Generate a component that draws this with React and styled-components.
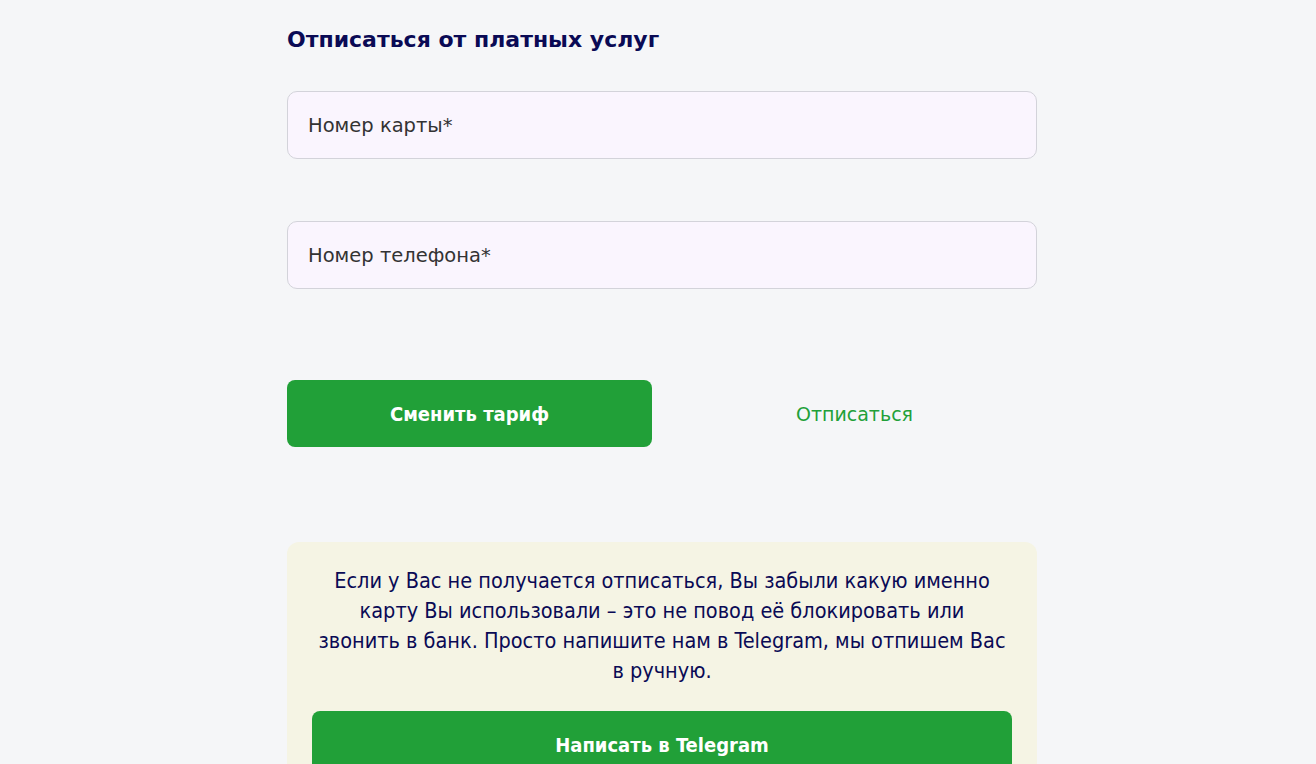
import React from 'react';
import styled, { createGlobalStyle } from 'styled-components';

const navy = '#0a0a55';
const green = '#21a038';

const GlobalStyle = createGlobalStyle`
    body {
        margin: 0;
        padding-left: 8px;
        background: #f5f6f8;
        font-family: "DejaVu Sans", sans-serif;
    }
`;

const Page = styled.div`
    width: 750px;
    margin: 0 auto;
    padding-top: 24px;
    display: flex;
    flex-direction: column;
`;

const Title = styled.h2`
    margin: 0 0 35px;
    font-size: 22px;
    line-height: 32px;
    font-weight: bold;
    color: ${navy};
`;

const Fields = styled.div`
    display: flex;
    flex-direction: column;
    gap: 62px;
`;

const Input = styled.input`
    box-sizing: border-box;
    height: 68px;
    width: 100%;
    padding: 0 20px;
    border: 1px solid #d3d3da;
    border-radius: 10px;
    background: #faf5fe;
    font-family: "DejaVu Sans", sans-serif;
    font-size: 19.5px;
    outline: none;

    &::placeholder {
        color: #333;
    }
`;

const Actions = styled.div`
    display: grid;
    grid-template-columns: 1fr 1fr;
    gap: 20px;
    margin-top: 91px;
`;

const Button = styled.button`
    height: 67px;
    border: none;
    border-radius: 8px;
    background: ${green};
    color: #fff;
    font-family: "DejaVu Sans Condensed", sans-serif;
    font-weight: bold;
    font-size: 20px;
    cursor: pointer;
    width: 100%;
`;

const LinkButton = styled.button`
    height: 67px;
    border: none;
    background: none;
    color: ${green};
    font-family: "DejaVu Sans", sans-serif;
    font-size: 19px;
    cursor: pointer;
`;

const Note = styled.div`
    margin-top: 95px;
    background: #f5f4e4;
    border-radius: 12px;
    padding: 24px 25px 0;
    display: flex;
    flex-direction: column;
    gap: 25px;
`;

const NoteText = styled.p`
    margin: 0 -12px;
    text-align: center;
    color: ${navy};
    font-family: "DejaVu Sans Condensed", sans-serif;
    font-size: 21.5px;
    line-height: 30px;
`;

const App = () => (
    <>
        <GlobalStyle />
        <Page>
            <Title>Отписаться от платных услуг</Title>
            <Fields>
                <Input placeholder="Номер карты*" />
                <Input placeholder="Номер телефона*" />
            </Fields>
            <Actions>
                <Button>Сменить тариф</Button>
                <LinkButton>Отписаться</LinkButton>
            </Actions>
            <Note>
                <NoteText>
                    Если у Вас не получается отписаться, Вы забыли какую именно<br />
                    карту Вы использовали – это не повод её блокировать или<br />
                    звонить в банк. Просто напишите нам в Telegram, мы отпишем Вас<br />
                    в ручную.
                </NoteText>
                <Button>Написать в Telegram</Button>
            </Note>
        </Page>
    </>
);

export default App;
